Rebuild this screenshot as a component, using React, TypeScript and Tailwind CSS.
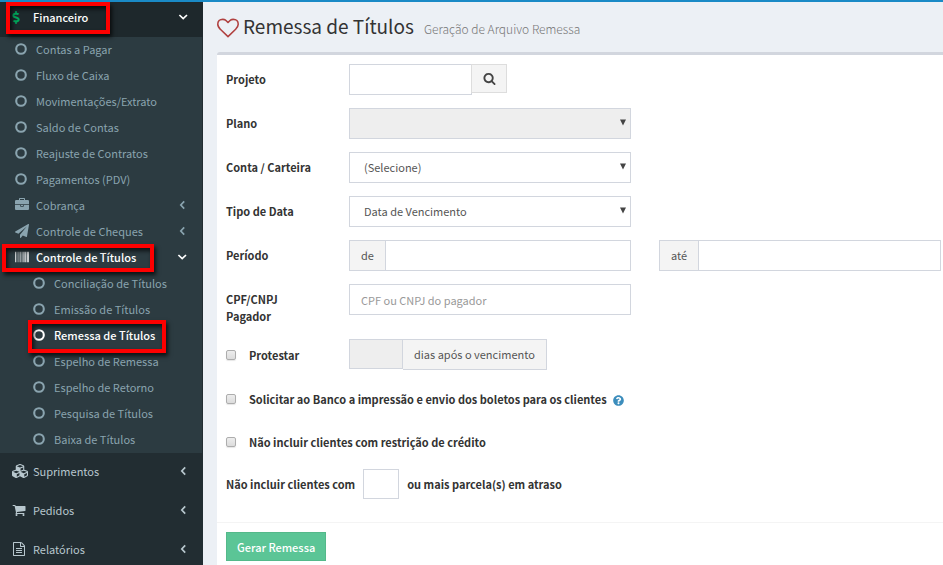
import { useState } from 'react';
import type { ReactNode } from 'react';
import clsx from 'clsx';
import { FaBarcode, FaCubes, FaDollarSign, FaQuestionCircle } from 'react-icons/fa';

interface IconProps {
  className?: string;
}

interface SubItem {
  label: string;
  icon?: ReactNode;
  children?: boolean;
}

const makeIcon = (path: string) => ({ className }: IconProps) => (
  <svg viewBox="0 0 1792 1792" fill="currentColor" className={className} aria-hidden="true">
    <path d={path} />
  </svg>
);

const HeartIcon = makeIcon('M1664 596q0-81-21.5-143t-55-98.5-81.5-59.5-94-31-98-8-112 25.5-110.5 64-86.5 72-60 61.5q-18 22-49 22t-49-22q-24-28-60-61.5t-86.5-72-110.5-64-112-25.5-98 8-94 31-81.5 59.5-55 98.5-21.5 143q0 168 187 355l581 560 580-559q188-188 188-356zm128 0q0 221-229 450l-623 600q-18 18-44 18t-44-18l-624-602q-10-8-27.5-26t-55.5-65.5-68-97.5-53.5-121-23.5-138q0-220 127-344t351-124q62 0 126.5 21.5t120 58 95.5 68.5 76 68q36-36 76-68t95.5-68.5 120-58 126.5-21.5q224 0 351 124t127 344z');
const BriefcaseIcon = makeIcon('M640 256h512v-128h-512v128zm1152 640v480q0 66-47 113t-113 47h-1472q-66 0-113-47t-47-113v-480h672v160q0 26 19 45t45 19h320q26 0 45-19t19-45v-160h672zm-768 0v128h-256v-128h256zm768-480v384h-1792v-384q0-66 47-113t113-47h352v-160q0-40 28-68t68-28h576q40 0 68 28t28 68v160h352q66 0 113 47t47 113z');
const PlaneIcon = makeIcon('M1764 11q33 24 27 64l-256 1536q-5 29-32 45-14 8-31 8-11 0-24-5l-453-185-242 295q-18 23-49 23-13 0-22-4-19-7-30.5-23.5t-11.5-36.5v-349l864-1059-1069 925-395-162q-37-14-40-55-2-40 32-59l1664-960q15-9 32-9 20 0 36 11z');
const CartIcon = makeIcon('M704 1536q0 52-38 90t-90 38-90-38-38-90 38-90 90-38 90 38 38 90zm896 0q0 52-38 90t-90 38-90-38-38-90 38-90 90-38 90 38 38 90zm128-1088v512q0 24-16.5 42.5t-40.5 21.5l-1044 122q13 60 13 70 0 16-24 64h920q26 0 45 19t19 45-19 45-45 19h-1024q-26 0-45-19t-19-45q0-11 8-31.5t16-36 21.5-40 15.5-29.5l-177-823h-204q-26 0-45-19t-19-45 19-45 45-19h256q16 0 28.5 6.5t19.5 15.5 13 24.5 8 26 5.5 29.5 4.5 26h1201q26 0 45 19t19 45z');
const SearchIcon = makeIcon('M1216 832q0-185-131.5-316.5t-316.5-131.5-316.5 131.5-131.5 316.5 131.5 316.5 316.5 131.5 316.5-131.5 131.5-316.5zm512 832q0 52-38 90t-90 38q-54 0-90-38l-343-342q-179 124-399 124-143 0-273.5-55.5t-225-150-150-225-55.5-273.5 55.5-273.5 150-225 225-150 273.5-55.5 273.5 55.5 225 150 150 225 55.5 273.5q0 220-124 399l343 343q37 37 37 90z');
const FileIcon = makeIcon('M1596 380q28 28 48 76t20 88v1152q0 40-28 68t-68 28h-1344q-40 0-68-28t-28-68v-1600q0-40 28-68t68-28h896q40 0 88 20t76 48zm-444-244v376h376q-10-29-22-41l-313-313q-12-12-41-22zm384 1528v-1024h-416q-40 0-68-28t-28-68v-416h-768v1536h1280zm-1024-864q0-14 9-23t23-9h704q14 0 23 9t9 23v64q0 14-9 23t-23 9h-704q-14 0-23-9t-9-23v-64zm736 224q14 0 23 9t9 23v64q0 14-9 23t-23 9h-704q-14 0-23-9t-9-23v-64q0-14 9-23t23-9h704zm0 256q14 0 23 9t9 23v64q0 14-9 23t-23 9h-704q-14 0-23-9t-9-23v-64q0-14 9-23t23-9h704z');

const RingIcon = () => (
  <svg viewBox="0 0 12 12" className="h-3 w-3" fill="none" stroke="currentColor" strokeWidth="2.1" aria-hidden="true">
    <circle cx="6" cy="6" r="4.8" />
  </svg>
);

function Angle({ open }: { open?: boolean }) {
  return (
    <svg viewBox="0 0 10 10" className="h-[10px] w-[10px]" fill="none" stroke="currentColor" strokeWidth="1.7" aria-hidden="true">
      <path d={open ? 'M1.4 3L5.2 6.6L9 3' : 'M7.2 1.4L3.8 5L7.2 8.6'} />
    </svg>
  );
}

// red marker drawn around the highlighted menu entries
function Marker({ className }: { className: string }) {
  return (
    <span
      className={clsx(
        'pointer-events-none absolute z-10 border-4 border-[#fe0000] shadow-[2px_3px_4px_rgba(0,0,0,0.7),inset_2px_3px_4px_rgba(0,0,0,0.7)]',
        className
      )}
    />
  );
}

const financeItems: SubItem[] = [
  { label: 'Contas a Pagar' },
  { label: 'Fluxo de Caixa' },
  { label: 'Movimentações/Extrato' },
  { label: 'Saldo de Contas' },
  { label: 'Reajuste de Contratos' },
  { label: 'Pagamentos (PDV)' },
  { label: 'Cobrança', icon: <BriefcaseIcon className="h-[14px] w-[14px]" />, children: true },
  { label: 'Controle de Cheques', icon: <PlaneIcon className="h-[14px] w-[14px]" />, children: true },
];

const titleItems = [
  'Conciliação de Títulos',
  'Emissão de Títulos',
  'Remessa de Títulos',
  'Espelho de Remessa',
  'Espelho de Retorno',
  'Pesquisa de Títulos',
  'Baixa de Títulos',
];

const mainItems = [
  { label: 'Suprimentos', icon: <FaCubes className="h-4 w-4" /> },
  { label: 'Pedidos', icon: <CartIcon className="h-[14px] w-[14px]" /> },
  { label: 'Relatórios', icon: <FileIcon className="h-[14px] w-[14px]" /> },
];

function Sidebar() {
  const active = 'Remessa de Títulos';

  return (
    <nav className="w-[203px] shrink-0 bg-[#222d32] text-[11px] text-[#b8c7ce]">
      <a href="#" className="relative flex h-[35px] items-center bg-[#1e282c] pr-[15px] pb-[5px] pl-3 font-medium text-white">
        <span className="flex w-[21px] text-[#00a65a]">
          <FaDollarSign className="h-[13px] w-2" />
        </span>
        <span className="flex-1">Financeiro</span>
        <Angle open />
        <Marker className="top-0 left-[6px] h-8 w-[104px]" />
      </a>

      <ul className="mr-px bg-[#2c3b41] text-[#8aa4af]">
        {financeItems.map(item => (
          <li key={item.label}>
            <a href="#" className="flex h-[26px] items-center pr-[15px] pb-[2px] pl-[15px]">
              <span className="flex w-[21px]">{item.icon ?? <RingIcon />}</span>
              <span className="flex-1">{item.label}</span>
              {item.children && <Angle />}
            </a>
          </li>
        ))}
        <li>
          <a href="#" className="relative flex h-[26px] items-center pr-[15px] pb-[2px] pl-[15px] font-medium text-white">
            <span className="flex w-[21px]">
              <FaBarcode className="h-[14px] w-[14px]" />
            </span>
            <span className="flex-1">Controle de Títulos</span>
            <Angle open />
            <Marker className="-top-px left-[2px] h-7 w-[152px]" />
          </a>
          <ul>
            {titleItems.map(label => (
              <li key={label}>
                <a
                  href="#"
                  className={clsx('relative flex h-[26px] items-center pb-[2px] pl-[33px]', label === active && 'font-medium text-white')}
                >
                  <span className="flex w-[21px]"><RingIcon /></span>
                  {label}
                  {label === active && <Marker className="-top-[3px] left-7 h-[33px] w-[138px]" />}
                </a>
              </li>
            ))}
          </ul>
        </li>
      </ul>

      {mainItems.map(item => (
        <a key={item.label} href="#" className="flex h-[39px] items-center pr-[15px] pb-1 pl-3">
          <span className="flex w-[21px]">{item.icon}</span>
          <span className="flex-1">{item.label}</span>
          <Angle />
        </a>
      ))}
    </nav>
  );
}

interface RowProps {
  label: string;
  htmlFor: string;
  children: ReactNode;
}

function Row({ label, htmlFor, children }: RowProps) {
  return (
    <div className="flex">
      <label htmlFor={htmlFor} className="w-[123px] shrink-0 pt-[7px] pr-7 pb-px leading-[17px] font-bold text-[#333]">
        {label}
      </label>
      <div className="grid flex-1 grid-cols-2 gap-7">{children}</div>
    </div>
  );
}

interface SelectProps {
  id: string;
  options: string[];
  disabled?: boolean;
}

function Select({ id, options, disabled }: SelectProps) {
  return (
    <div className="relative">
      <select
        id={id}
        disabled={disabled}
        className="block h-[31px] w-full appearance-none border border-[#d2d6de] bg-white pb-[2px] pl-[14px] text-[#555] opacity-100 disabled:bg-[#eee]"
      >
        {options.map(o => (
          <option key={o}>{o}</option>
        ))}
      </select>
      <svg viewBox="0 0 8 7" className="pointer-events-none absolute top-[11px] right-1 h-[7px] w-2" fill="#444" aria-hidden="true">
        <path d="M1 0.5H7L4 6.5Z" />
      </svg>
    </div>
  );
}

const inputClass = 'h-[31px] min-w-0 border border-[#d2d6de] bg-white px-[11px] text-[#555] outline-none placeholder:text-[#999]';
const addonClass = 'flex h-[31px] items-center border border-[#d2d6de] bg-[#f4f4f4] px-[11px] pb-[2px] text-[#555]';
const checkboxClass =
  'h-[10px] w-[10px] shrink-0 appearance-none rounded-[2px] border border-[#adadad] bg-linear-to-b from-[#ededed] to-[#dcdcdc] shadow-[0_1px_1px_rgba(0,0,0,0.1)] checked:bg-[#3c8dbc]';

function RemessaForm() {
  const [protestar, setProtestar] = useState(false);

  return (
    <form className="rounded-tl-[3px] border-t-[3px] border-[#d2d6de] bg-white text-[11px]" onSubmit={e => e.preventDefault()}>
      <div className="flex flex-col gap-[13px] pt-[9px] pr-[2px] pl-[9px]">
        <Row label="Projeto" htmlFor="projeto">
          <div className="flex">
            <input id="projeto" type="text" className={clsx(inputClass, 'w-[123px]')} />
            <button type="button" aria-label="Buscar" className="-ml-px flex h-[29px] w-9 items-center justify-center border border-[#ddd] bg-[#f4f4f4] text-[#444]">
              <SearchIcon className="h-[13px] w-[13px]" />
            </button>
          </div>
        </Row>
        <Row label="Plano" htmlFor="plano">
          <Select id="plano" options={[]} disabled />
        </Row>
        <Row label="Conta / Carteira" htmlFor="conta">
          <Select id="conta" options={['(Selecione)']} />
        </Row>
        <Row label="Tipo de Data" htmlFor="tipo">
          <Select id="tipo" options={['Data de Vencimento', 'Data de Emissão']} />
        </Row>
        <Row label="Período" htmlFor="de">
          <div className="flex">
            <label htmlFor="de" className={addonClass}>de</label>
            <input id="de" type="text" className={clsx(inputClass, '-ml-px flex-1')} />
          </div>
          <div className="flex">
            <label htmlFor="ate" className={addonClass}>até</label>
            <input id="ate" type="text" className={clsx(inputClass, '-ml-px flex-1')} />
          </div>
        </Row>
        <Row label="CPF/CNPJ Pagador" htmlFor="cpf">
          <input id="cpf" type="text" placeholder="CPF ou CNPJ do pagador" className={inputClass} />
        </Row>

        <div className="flex">
          <label className="flex h-[31px] w-[123px] shrink-0 items-center gap-[13px] font-bold text-[#333]">
            <input type="checkbox" className={checkboxClass} checked={protestar} onChange={e => setProtestar(e.target.checked)} />
            Protestar
          </label>
          <input
            type="text"
            aria-label="Dias após o vencimento"
            disabled={!protestar}
            className="h-[30px] w-[54px] border border-[#d2d6de] bg-white px-[11px] disabled:bg-[#eee]"
          />
          <span className={clsx(addonClass, 'border-l-0')}>dias após o vencimento</span>
        </div>
      </div>

      <div className="flex flex-col px-[9px] pt-[17px] pb-[23px] font-bold text-[#333]">
        <div className="flex h-6 items-center">
          <label className="flex items-center gap-[13px]">
            <input type="checkbox" className={checkboxClass} />
            Solicitar ao Banco a impressão e envio dos boletos para os clientes
          </label>
          <FaQuestionCircle className="mt-[2px] ml-[6px] h-[11px] w-[11px] text-[#3c8dbc]" />
        </div>
        <label className="mt-[19px] flex h-6 items-center gap-[13px]">
          <input type="checkbox" className={checkboxClass} />
          Não incluir clientes com restrição de crédito
        </label>
        <label className="mt-[15px] flex items-center gap-2">
          Não incluir clientes com
          <input type="text" className="h-[30px] w-9 border border-[#d2d6de] px-2 font-normal" />
          ou mais parcela(s) em atraso
        </label>
      </div>

      <div className="border-t border-[#f4f4f4] p-[9px]">
        <button type="submit" className="h-[29px] border border-[#54b98a] bg-[#5bc596] px-[10px] font-medium text-white">
          Gerar Remessa
        </button>
      </div>
    </form>
  );
}

export default function App() {
  return (
    <div className="flex min-h-screen flex-col overflow-x-hidden border-t-2 border-[#1a8ac6] bg-[#ecf0f5] font-['Noto_Sans_CJK_SC',sans-serif] leading-[18px]">
      <div className="flex flex-1">
        <Sidebar />
        <main className="min-w-0 flex-1 pl-[14px]">
          <header className="flex h-[50px] items-center pt-px">
            <HeartIcon className="mr-1 h-[22px] w-[22px] text-[#b0403f]" />
            <h1 className="flex items-baseline gap-[10px] text-[19px] text-[#333]">
              Remessa de Títulos
              <small className="text-[12px] font-light text-[#777]">Geração de Arquivo Remessa</small>
            </h1>
          </header>
          <RemessaForm />
        </main>
      </div>
    </div>
  );
}
